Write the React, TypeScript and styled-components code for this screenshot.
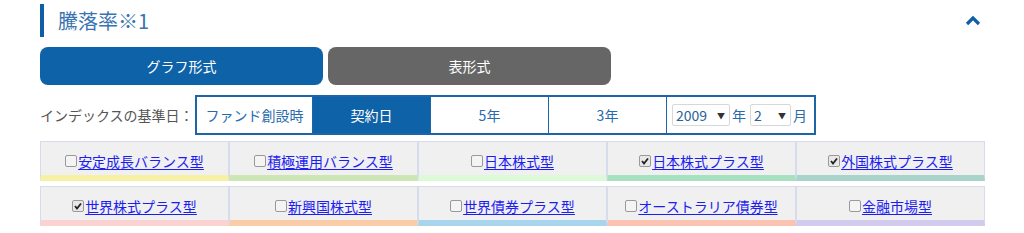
import React from "react";
import styled, { createGlobalStyle } from "styled-components";

const Global = createGlobalStyle`
  html, body { margin: 0; padding: 0; background: #fff; }
  body { font-family: "Noto Sans CJK JP", "Noto Sans", sans-serif; }
`;

const Page = styled.div`
  width: 945px;
  padding: 4px 0 0 40px;
`;

const Header = styled.div`
  display: flex;
  align-items: center;
  justify-content: space-between;
  height: 33px;
  border-left: 4px solid #0e5fa5;
  padding-left: 14px;
`;

const Title = styled.h2`
  margin: 0;
  font-size: 20px;
  font-weight: 400;
  color: #3a74b0;
  line-height: 1;
`;

const Toggle = styled.button`
  border: 0;
  background: none;
  padding: 0;
  margin-right: 4px;
  display: flex;
  cursor: pointer;
`;

const Tabs = styled.div`
  display: flex;
  gap: 5px;
  margin-top: 10px;
`;

const Tab = styled.button<{ $active?: boolean }>`
  width: 283px;
  height: 38px;
  border: 0;
  border-radius: 8px;
  background: ${(p) => (p.$active ? "#0e62a8" : "#666666")};
  color: #fff;
  font-family: inherit;
  font-size: 14px;
  font-weight: 400;
  cursor: pointer;
`;

const IndexRow = styled.div`
  display: flex;
  align-items: center;
  margin-top: 10px;
`;

const IndexLabel = styled.span`
  width: 155px;
  white-space: nowrap;
  font-size: 14px;
  color: #555;
`;

const IndexBox = styled.div`
  display: flex;
  height: 36px;
  border: 2px solid #1d65a8;
`;

const IndexCell = styled.div<{ $w: number; $active?: boolean }>`
  width: ${(p) => p.$w}px;
  display: flex;
  align-items: center;
  justify-content: center;
  gap: 2px;
  font-size: 14px;
  color: ${(p) => (p.$active ? "#fff" : "#2a6bae")};
  background: ${(p) => (p.$active ? "#0e62a8" : "#fff")};
  & + & {
    border-left: 1px solid #1d65a8;
  }
`;

const Select = styled.div<{ $w: number }>`
  width: ${(p) => p.$w}px;
  height: 22px;
  box-sizing: border-box;
  border: 1px solid #d8d8d8;
  border-radius: 2px;
  display: flex;
  align-items: center;
  justify-content: space-between;
  padding: 0 4px 0 3px;
  font-size: 14px;
  color: #2a5f9a;
  &::after {
    content: "▼";
    font-size: 8px;
    color: #333;
  }
`;

const Unit = styled.span`
  color: #2a6bae;
  font-size: 14px;
  margin-right: 2px;
`;

const Grid = styled.div`
  display: grid;
  grid-template-columns: repeat(5, 1fr);
  row-gap: 5px;
  margin-top: 6px;
`;

const Fund = styled.label<{ $bar: string }>`
  height: 40px;
  box-sizing: border-box;
  border: 1px solid #d6dceb;
  border-bottom: 6px solid ${(p) => p.$bar};
  background: #f0f0f0;
  display: flex;
  align-items: center;
  justify-content: center;
  padding-top: 4px;
  font-size: 14px;
`;

const Check = styled.span<{ $checked?: boolean }>`
  width: 10px;
  height: 10px;
  border: 1px solid #999;
  border-radius: 2px;
  background: ${(p) => (p.$checked ? "#e8e8e8" : "#f4f4f4")};
  margin-right: 1px;
  display: flex;
  align-items: center;
  justify-content: center;
`;

const FundLink = styled.a`
  color: #1d1df0;
  text-decoration: underline;
  text-underline-offset: 2px;
  line-height: 1;
`;

const funds: { name: string; bar: string; checked?: boolean }[] = [
  { name: "安定成長バランス型", bar: "#f6f1a4" },
  { name: "積極運用バランス型", bar: "#cce6b6" },
  { name: "日本株式型", bar: "#dcf9d8" },
  { name: "日本株式プラス型", bar: "#a8e0c2", checked: true },
  { name: "外国株式プラス型", bar: "#a9d4cc", checked: true },
  { name: "世界株式プラス型", bar: "#fbd2d2", checked: true },
  { name: "新興国株式型", bar: "#fbcca8" },
  { name: "世界債券プラス型", bar: "#a9d4ee" },
  { name: "オーストラリア債券型", bar: "#fcc2b2" },
  { name: "金融市場型", bar: "#d2cbee" },
];

export default function App() {
  return (
    <>
      <Global />
      <Page>
        <Header>
          <Title>騰落率※1</Title>
          <Toggle aria-label="閉じる">
            <svg width="16" height="11" viewBox="0 0 16 11">
              <path d="M2 9 L8 3 L14 9" fill="none" stroke="#0e5fa5" strokeWidth="3.2" />
            </svg>
          </Toggle>
        </Header>
        <Tabs>
          <Tab $active>グラフ形式</Tab>
          <Tab>表形式</Tab>
        </Tabs>
        <IndexRow>
          <IndexLabel>インデックスの基準日：</IndexLabel>
          <IndexBox>
            <IndexCell $w={115}>ファンド創設時</IndexCell>
            <IndexCell $w={117} $active>契約日</IndexCell>
            <IndexCell $w={117}>5年</IndexCell>
            <IndexCell $w={117}>3年</IndexCell>
            <IndexCell $w={147}>
              <Select $w={58}>2009</Select>
              <Unit>年</Unit>
              <Select $w={41}>2</Select>
              <Unit>月</Unit>
            </IndexCell>
          </IndexBox>
        </IndexRow>
        <Grid>
          {funds.map((f) => (
            <Fund key={f.name} $bar={f.bar}>
              <Check $checked={f.checked}>
                {f.checked && (
                  <svg width="8" height="8" viewBox="0 0 8 8">
                    <path d="M1 4 L3 6.5 L7 1.5" fill="none" stroke="#222" strokeWidth="1.8" />
                  </svg>
                )}
              </Check>
              <FundLink href="#">{f.name}</FundLink>
            </Fund>
          ))}
        </Grid>
      </Page>
    </>
  );
}
